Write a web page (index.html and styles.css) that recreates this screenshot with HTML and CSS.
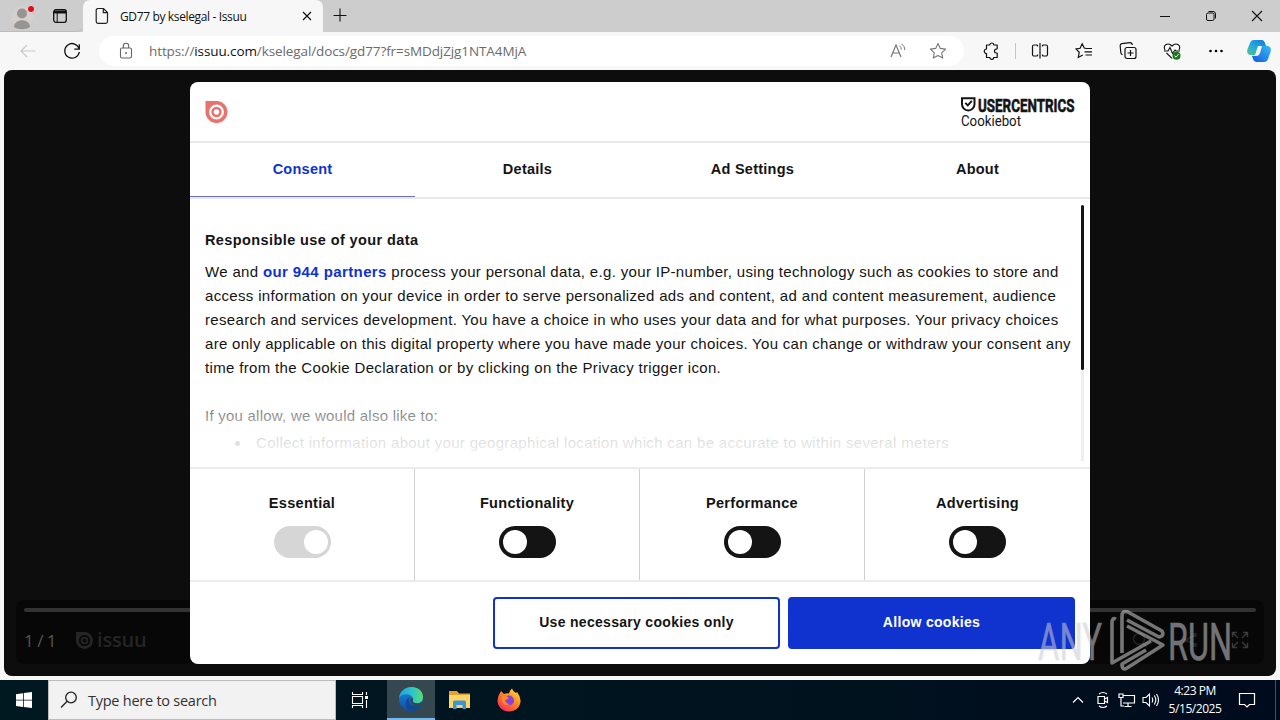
FILE: index.html
```html
<!DOCTYPE html>
<html lang="en">
<head>
<meta charset="UTF-8">
<meta name="viewport" content="width=device-width, initial-scale=1.0">
<title>GD77 by kselegal - Issuu</title>
<link rel="stylesheet" href="styles.css">
</head>
<body>

  <div class="desktop">
    <!-- Tab strip -->
    <header class="tabstrip">
      <div class="strip-left">
        <svg class="profile" width="26" height="28" viewBox="0 0 26 28"><circle cx="13" cy="14" r="11" fill="#d5d0ce"/><circle cx="13" cy="10.5" r="5" fill="#989492"/><path d="M5 24c0-9 16-9 16 0c-4 3-12 3-16 0z" fill="#989492"/><circle cx="22" cy="6" r="3.6" fill="#e00b1c" stroke="#ddd"/></svg>
        <svg width="16" height="16" viewBox="0 0 16 16"><rect x="1.7" y="1.7" width="12.6" height="12.6" rx="2.2" fill="none" stroke="#111" stroke-width="1.3"/><path d="M2 2.5h12v3H2z" fill="#111"/><path d="M5.2 5v9" stroke="#111"/></svg>
      </div>
      <div class="tab">
        <svg width="14" height="18" viewBox="0 0 14 18"><path d="M3 1.500h5.500l4 4V14.500a1.800 1.800 0 0 1-1.800 1.800H3a1.800 1.800 0 0 1-1.800-1.800V3.300A1.800 1.800 0 0 1 3 1.500zM8.300 1.700v4h4" fill="none" stroke="#222" stroke-width="1.200"/></svg>
        <span class="tab-title">GD77 by kselegal - Issuu</span>
        <svg width="10" height="10" viewBox="0 0 10 10"><path d="M1 1l8 8M9 1l-8 8" stroke="#111" stroke-width="1.2"/></svg>
      </div>
      <svg class="newtab" width="14" height="14" viewBox="0 0 14 14"><path d="M7 0.500v13M0.500 7.500h13" stroke="#111" stroke-width="1.100"/></svg>
      <div class="window-buttons">
        <div><svg width="12" height="12" viewBox="0 0 12 12"><path d="M1 6.500h10" stroke="#111"/></svg></div>
        <div><svg width="12" height="12" viewBox="0 0 12 12"><rect x="1.500" y="3" width="7.500" height="7.500" rx="1.500" fill="none" stroke="#111"/><path d="M3.500 1.500h4.500a2.500 2.500 0 0 1 2.500 2.500v4.500" fill="none" stroke="#111"/></svg></div>
        <div><svg width="12" height="12" viewBox="0 0 12 12"><path d="M1 1l10 10M11 1L1 11" stroke="#111" stroke-width="1.100"/></svg></div>
      </div>
    </header>

    <!-- Toolbar -->
    <nav class="toolbar">
      <svg class="back" width="16" height="14" viewBox="0 0 16 14"><path d="M15.500 7H1M7 1L1 7l6 6" fill="none" stroke="#c9c9c9" stroke-width="1.200"/></svg>
      <svg class="reload" width="18" height="18" viewBox="0 0 18 18"><path d="M16.200 7.200A7.300 7.300 0 1 0 16.300 10M16.300 2.200v5h-5" fill="none" stroke="#111" stroke-width="1.300"/></svg>
      <div class="address">
        <svg class="lock" width="14" height="18" viewBox="0 0 14 18"><rect x="1.500" y="6" width="11" height="10" rx="1.500" fill="none" stroke="#666" stroke-width="1.100"/><path d="M4.300 6V4a2.700 2.700 0 0 1 5.400 0v2" fill="none" stroke="#666" stroke-width="1.100"/><circle cx="7" cy="11" r="1" fill="#666"/></svg>
        <span class="url">https://<b>issuu.com</b>/kselegal/docs/gd77?fr=sMDdjZjg1NTA4MjA</span>
        <svg class="read" width="18" height="18" viewBox="0 0 18 18"><path d="M2 15L7 3l5 12M3.700 11h6.600" fill="none" stroke="#777" stroke-width="1.200"/><path d="M10.500 3.700q2 1.500 1.800 4M12.500 1.800q3.500 2.200 3.300 6.200" fill="none" stroke="#777"/></svg>
        <svg class="fav" width="18" height="18" viewBox="0 0 18 18"><path d="M9 1.500l2.300 4.900 5.300.7-3.900 3.700 1 5.300L9 13.500l-4.700 2.600 1-5.300L1.400 7.100l5.300-.7z" fill="none" stroke="#777" stroke-width="1.100" stroke-linejoin="round"/></svg>
      </div>
      <div class="tools">
        <div><svg width="18" height="18" viewBox="0 0 18 18"><path d="M4.500 3h3.300a2 2 0 0 1 4 0h3.400v3.300a.8.8 0 0 1-.8.900a1.900 1.900 0 0 0 0 3.800a.8.8 0 0 1 .8.900V15.500h-3.500a1.900 1.900 0 0 1-3.800 0H4.500v-4a2.200 2.200 0 1 1 0-4.500z" fill="none" stroke="#111" stroke-width="1.200" stroke-linejoin="round"/></svg></div>
        <i class="divider"></i>
        <div><svg width="18" height="18" viewBox="0 0 18 18"><path d="M6.500 3H3a1.500 1.500 0 0 0-1.500 1.500v8A1.500 1.500 0 0 0 3 14h3.500M11.500 3H15a1.500 1.500 0 0 1 1.500 1.500v8A1.500 1.500 0 0 1 15 14h-3.500M6.500 3v1.500M6.500 14v-1.500M11.500 3v1.500M11.500 14v-1.500M9 1v15.500" fill="none" stroke="#111" stroke-width="1.200"/></svg></div>
        <div><svg width="18" height="18" viewBox="0 0 18 18"><path d="M11 6.500L9.300 6 7.200 1.800 5.100 6.300 1 7l3.200 3.300-.9 5.100 4.500-2.500M10.500 6.500h6.500M9.500 9.800h7.500M10.500 13h6.500" fill="none" stroke="#111" stroke-width="1.200"/></svg></div>
        <div><svg width="18" height="18" viewBox="0 0 18 18"><rect x="6" y="5.500" width="11" height="11" rx="2" fill="none" stroke="#111" stroke-width="1.200"/><path d="M11.500 8v6M8.500 11h6M3.500 12.800q-1.500-.7-1.700-2.300L1.200 4a2 2 0 0 1 1.700-2.300l8-1q2-.1 2.400 2.300" fill="none" stroke="#111" stroke-width="1.200"/></svg></div>
        <div><svg width="18" height="18" viewBox="0 0 18 18"><path d="M2 8C-.5 3 5-.2 9 4c4-4.200 9.500-1 7 4M1 9h4l2-3.500 2.500 6L12 8l1 1h4M3.500 11L9 16.300" fill="none" stroke="#111" stroke-width="1.100"/><circle cx="13.500" cy="13.700" r="4" fill="#157a1b"/><path d="M11.500 13.800l1.500 1.400 2.600-3" fill="none" stroke="#fff"/></svg></div>
        <div><svg width="18" height="18" viewBox="0 0 18 18"><circle cx="3.500" cy="9" r="1.300"/><circle cx="9" cy="9" r="1.300"/><circle cx="14.500" cy="9" r="1.300"/></svg></div>
        <div class="copilot"><svg width="26" height="24" viewBox="0 0 26 24">
          <defs>
            <linearGradient id="cpA" x1="1" y1="0" x2="0" y2="1"><stop offset="0" stop-color="#1279d8"/><stop offset=".5" stop-color="#22a6df"/><stop offset="1" stop-color="#50c78b"/></linearGradient>
            <linearGradient id="cpB" x1="1" y1="0" x2="0" y2="1"><stop offset="0" stop-color="#35bdf0"/><stop offset="1" stop-color="#1557e8"/></linearGradient>
          </defs>
          <path d="M8 1h8q2 0 3 3l1 3h-4q-3 0-4 3l-2 6H4Q0 15 1.500 10L4 4Q5 1 8 1z" fill="url(#cpA)"/>
          <path d="M18 23h-8q-2 0-3-3l-1-3h4q3 0 4-3l2-7h6q4 1 2.500 6L22 20q-1 3-4 3z" fill="url(#cpB)"/>
          <path d="M12 7h3l-2.500 9H9z" fill="#f7f7f7"/>
        </svg></div>
      </div>
    </nav>

    <!-- Page -->
    <main class="viewport">
      <div class="player">
        <div class="track"></div>
        <div class="controls">
          <span class="pages">1 / 1</span>
          <svg width="17" height="17" viewBox="0 0 23 23"><path d="M0 0h11.500A11.500 11.500 0 1 1 0 11.500z" fill="#252525"/><circle cx="11.500" cy="11.500" r="6.400" fill="none" stroke="#070707" stroke-width="2.400"/><circle cx="11.500" cy="11.500" r="2.600" fill="#070707"/></svg>
          <span class="brand">issuu</span>
          <div class="control-icons">
            <svg width="18" height="18" viewBox="0 0 18 18"><circle cx="8" cy="8" r="5.500" fill="none" stroke="#222" stroke-width="1.500"/><path d="M12 12l4 4" stroke="#222" stroke-width="1.500"/></svg>
            <svg width="18" height="18" viewBox="0 0 18 18"><path d="M14 4L5 9l9 5" fill="none" stroke="#222" stroke-width="1.500"/><circle cx="14" cy="4" r="2.200" fill="#222"/><circle cx="5" cy="9" r="2.200" fill="#222"/><circle cx="14" cy="14" r="2.200" fill="#222"/></svg>
            <svg width="18" height="18" viewBox="0 0 18 18"><path d="M1.500 6V1.500H6M1.500 1.500l5.500 5.500M12 1.500h4.500V6M16.500 1.500L11 7M1.500 12v4.500H6M1.500 16.500L7 11M12 16.500h4.500V12M16.500 16.500L11 11" fill="none" stroke="#3a3a3a" stroke-width="1.400"/></svg>
          </div>
        </div>
      </div>
    </main>

    <!-- Taskbar -->
    <footer class="taskbar">
      <div class="start"><svg width="16" height="16" viewBox="0 0 16 16"><path d="M0 2.200L7 1.200v6.500H0zM7.800 1.100L16 0v7.700H7.800zM0 8.400h7v6.500l-7-1zM7.800 8.400H16V16l-8.200-1.100z" fill="#fff"/></svg></div>
      <div class="search">
        <svg width="18" height="18" viewBox="0 0 18 18"><circle cx="11" cy="6.500" r="5.300" fill="none" stroke="#222" stroke-width="1.300"/><path d="M7.200 10.300L1 16.500" stroke="#222" stroke-width="1.300"/></svg>
        <span>Type here to search</span>
      </div>
      <div class="task view"><svg width="18" height="18" viewBox="0 0 18 18"><path d="M1.500 1v2.500h10V1M1.500 17v-2.500h10V17M1.500 5.500h10v7h-10zM15.500 1v3M15.500 9v8" fill="none" stroke="#fff" stroke-width="1.100"/><path d="M14 5h3v3h-3z" fill="#fff"/></svg></div>
      <div class="task active"><svg width="26" height="26" viewBox="0 0 26 26">
        <defs>
          <linearGradient id="edA" x1="0" y1="0" x2="1" y2="0"><stop offset="0" stop-color="#249bdc"/><stop offset=".5" stop-color="#2bc3cf"/><stop offset="1" stop-color="#5bdc70"/></linearGradient>
          <linearGradient id="edB" x1="0" y1="0" x2="0" y2="1"><stop offset="0" stop-color="#1b8bd9"/><stop offset="1" stop-color="#0b4fae"/></linearGradient>
        </defs>
        <circle cx="13" cy="13" r="12" fill="url(#edB)"/>
        <path d="M1 12C3-3 25-2 25 11c0 5-4 7-8 6-3-1-2-2-2-4 0-5-10-7-14-1z" fill="url(#edA)"/>
        <path d="M12 11c-3 4 0 9 5 9 3 0 5-.8 7-2.200-2 4-5 7-10 7C6 24.500 6 13 12 11z" fill="#104a93"/>
        <path d="M12.500 13c1-2 3-1 2.600.8-.4 1.700-.6 2.400 1.400 3.200 3 1 6 .5 8.500-1.500l1 2c-6 5-15 2-13.500-4.500z" fill="#35474f"/>
      </svg></div>
      <div class="task"><svg width="24" height="20" viewBox="0 0 24 20"><path d="M1 1h8l2 2.500h11V18H1z" fill="#e7a22e"/><path d="M1 5h21v13H1z" fill="#fbd567"/><path d="M5 19v-7q0-1.500 1.500-1.500h10q1.500 0 1.500 1.500v7h-3.500v-4h-6v4z" fill="#3f94d0"/></svg></div>
      <div class="task"><svg width="24" height="24" viewBox="0 0 24 24">
        <defs><linearGradient id="ffA" x1="1" y1="0" x2=".2" y2="1"><stop offset="0" stop-color="#fff03a"/><stop offset=".5" stop-color="#ff8524"/><stop offset="1" stop-color="#f9285c"/></linearGradient></defs>
        <path d="M3 5l1-2 3 3q2-1 5-.5Q13 2 15 .5q1 3 4 4.500l1-1q4 5 3.500 9.500C23 20 18 23.500 12 23.500S.5 19 .5 12.500Q.7 8 3 5z" fill="url(#ffA)"/>
        <circle cx="12" cy="12.500" r="5" fill="#8642d8"/><path d="M5 8q4-1 7 2-2 2-4 2 1 4 5 4-6 3-8-3z" fill="#ff8a22"/>
      </svg></div>
      <div class="tray">
        <svg width="12" height="8" viewBox="0 0 12 8"><path d="M1 6.500l5-5 5 5" fill="none" stroke="#fff" stroke-width="1.200"/></svg>
        <svg width="14" height="18" viewBox="0 0 14 18"><path d="M2 5.500h6.500v7H2zM8.500 8l3-1.500v5L8.500 10M3 3q4-3 8 0M3 15q4 3 8 0" fill="none" stroke="#fff" stroke-width="1.200"/></svg>
        <svg width="18" height="16" viewBox="0 0 18 16"><path d="M5 3.500h11.500v7.500H5M10 11v3.500M6.500 14.500h7M1 2h4v3.500H1zM3 5.500v8.500h3" fill="none" stroke="#fff" stroke-width="1.200"/></svg>
        <svg width="18" height="16" viewBox="0 0 18 16"><path d="M1 5.500h3L7.500 2v12L4 10.500H1zM10 5.500q1.500 2.500 0 5M12.300 3.500q3 4.500 0 9M14.500 2q4 6 0 12" fill="none" stroke="#fff" stroke-width="1.100"/></svg>
        <div class="clock"><span class="time">4:23 PM</span><span class="date">5/15/2025</span></div>
        <svg width="18" height="18" viewBox="0 0 18 18"><path d="M1.500 2.500h15v11h-5L9 16l-2.500-2.500h-5z" fill="none" stroke="#fff" stroke-width="1.200"/></svg>
        <i class="peek"></i>
      </div>
    </footer>

    <!-- Cookie dialog -->
    <section class="dialog">
      <div class="dialog-head">
        <svg width="23" height="22" viewBox="0 0 23 23"><path d="M0 0h11.500A11.500 11.500 0 1 1 0 11.500z" fill="#e9736c"/><circle cx="11.500" cy="11.500" r="6.600" fill="none" stroke="#fff" stroke-width="2.400"/><circle cx="11.500" cy="11.500" r="2.800" fill="#fff"/></svg>
        <svg width="116" height="34" viewBox="0 0 116 34">
          <path d="M2 3.200h12.500v6a6.200 6.200 0 0 1-12.500 0z" fill="none" stroke="#141414" stroke-width="2"/><path d="M5.300 7.800l2.500 2.600 4-4.600" fill="none" stroke="#141414" stroke-width="1.900"/>
          <text class="logo-bold" x="18" y="16.500" textLength="96.500" lengthAdjust="spacingAndGlyphs">USERCENTRICS</text>
          <text class="logo-light" x="1" y="31" textLength="60" lengthAdjust="spacingAndGlyphs">Cookiebot</text>
        </svg>
      </div>
      <div class="dialog-tabs">
        <div class="current">Consent</div>
        <div>Details</div>
        <div>Ad Settings</div>
        <div>About</div>
      </div>
      <div class="dialog-body">
        <div class="text">
          <h2>Responsible use of your data</h2>
          <p>We and <b>our 944 partners</b> process your personal data, e.g. your IP-number, using technology such as cookies to store and<br>
          access information on your device in order to serve personalized ads and content, ad and content measurement, audience<br>
          research and services development. You have a choice in who uses your data and for what purposes. Your privacy choices<br>
          <span class="tight">are only applicable on this digital property where you have made your choices. You can change or withdraw your consent any</span><br>
          time from the Cookie Declaration or by clicking on the Privacy trigger icon.</p>
          <p class="allow">If you allow, we would also like to:</p>
          <ul><li>Collect information about your geographical location which can be accurate to within several meters</li></ul>
        </div>
        <div class="scrollbar"><div class="thumb"></div></div>
      </div>
      <div class="choices">
        <div><span>Essential</span><i class="switch locked"></i></div>
        <div><span>Functionality</span><i class="switch"></i></div>
        <div><span>Performance</span><i class="switch"></i></div>
        <div><span>Advertising</span><i class="switch"></i></div>
      </div>
      <div class="actions">
        <button class="outline">Use necessary cookies only</button>
        <button class="filled">Allow cookies</button>
      </div>
    </section>

    <!-- Watermark -->
    <svg class="watermark" width="204" height="72" viewBox="0 0 204 72">
      <text x="2" y="52" textLength="64" lengthAdjust="spacingAndGlyphs">ANY</text>
      <text x="132" y="52" textLength="64" lengthAdjust="spacingAndGlyphs">RUN</text>
      <path d="M80 11q-4-2-4 4V55L115 33M86 45V8q0-6 6-4l34 19q3 5-3 6L91 12M91 18L127 37L91 60q-5 3-5-4L110 42" fill="none" stroke="#d0d0d0" stroke-width="3.600" stroke-linejoin="round"/>
    </svg>
  </div>

</body>
</html>
```
FILE: styles.css
```css
* {
  box-sizing: border-box;
}

body {
  margin: 0;
  font-family: "Open Sans", "Noto Sans", sans-serif;
  color: #111;
  overflow: hidden;
}

svg {
  display: block;
  flex-shrink: 0;
}

.desktop {
  position: relative;
  display: flex;
  flex-direction: column;
  width: 1280px;
  height: 720px;
  background: #f7f7f7;
}

/* Browser */
.tabstrip {
  display: flex;
  height: 32px;
  background: #cdcdcd;
}

.strip-left {
  display: flex;
  align-items: center;
  gap: 17px;
  width: 83px;
  padding-left: 9px;
  border-bottom: 1px solid #bbb;
  border-radius: 0 0 6px 0;
}

.profile {
  margin-top: 3px;
}

.tab {
  display: flex;
  align-items: center;
  width: 240px;
  padding: 0 11px 0 12px;
  background: #f7f7f7;
  border-radius: 7px 7px 0 0;
}

.tab-title {
  flex: 1;
  padding-left: 11px;
  font-size: 12px;
  letter-spacing: -0.36px;
  white-space: nowrap;
}

.newtab {
  margin: 8px 0 0 10px;
}

.window-buttons {
  display: flex;
  margin-left: auto;
}

.window-buttons div {
  display: flex;
  align-items: center;
  justify-content: center;
  width: 46px;
}

.toolbar {
  display: flex;
  align-items: center;
  height: 38px;
}

.back {
  margin-left: 20px;
}

.reload {
  margin-left: 27px;
}

.address {
  display: flex;
  align-items: center;
  width: 865px;
  height: 30px;
  margin-left: 18px;
  padding: 0 17px 0 20px;
  background: #fff;
  border-radius: 15px;
}

.url {
  margin-left: 16px;
  font-size: 13.5px;
  letter-spacing: -0.1px;
  color: #6b6b6b;
  white-space: nowrap;
}

.url b {
  font-weight: 400;
  color: #111;
}

.read {
  margin-left: auto;
}

.fav {
  margin-left: 22px;
}

.tools {
  display: flex;
  align-items: center;
  margin-left: auto;
}

.tools div {
  display: flex;
  align-items: center;
  justify-content: center;
  width: 44px;
}

.tools .copilot {
  width: 42px;
}

.divider {
  width: 1px;
  height: 16px;
  margin: 0 2px;
  background: #c6c6c6;
}

.viewport {
  display: flex;
  align-items: flex-end;
  height: 606px;
  margin: 0 4px 4px;
  padding: 12px;
  background: #0d0d0d;
  border-radius: 8px;
}

.player {
  width: 100%;
  height: 64px;
  padding: 8px;
  background: #070707;
  border-radius: 8px;
}

.track {
  height: 4px;
  background: #333;
  border-radius: 2px;
}

.controls {
  display: flex;
  align-items: center;
  height: 56px;
}

.pages {
  width: 52px;
  font-size: 17px;
  letter-spacing: -0.5px;
  color: #555;
}

.brand {
  margin-left: 4px;
  font-size: 20px;
  font-weight: 600;
  line-height: 20px;
  letter-spacing: -0.2px;
  color: #252525;
}

.control-icons {
  display: flex;
  gap: 32px;
  margin-left: auto;
  padding-right: 7px;
}

/* Taskbar */
.taskbar {
  display: flex;
  height: 40px;
  background: linear-gradient(90deg, #001820, #00131f 60%, #000b1d);
  color: #fff;
}

.start,
.task {
  display: flex;
  align-items: center;
  justify-content: center;
  width: 48px;
}

.task {
  width: 49px;
}

.task.view {
  width: 51px;
  padding-right: 3px;
}

.task.active {
  width: 48px;
  background: #35474f;
  border-bottom: 2px solid #76b9ed;
}

.search {
  display: flex;
  align-items: center;
  gap: 10px;
  width: 288px;
  padding-left: 11px;
  background: #f2f2f2;
  border: 1px solid #bbb;
  color: #333;
  font-size: 14.5px;
  letter-spacing: -0.25px;
}

.tray {
  display: flex;
  align-items: center;
  margin-left: auto;
}

.tray svg + svg {
  margin-left: 12px;
}

.tray svg:nth-child(3) {
  margin-left: 8px;
}

.tray svg:nth-child(4) {
  margin-left: 6px;
}

.clock {
  display: flex;
  flex-direction: column;
  align-items: center;
  width: 70px;
  margin-right: 8px;
  font-size: 12px;
  line-height: 18px;
  letter-spacing: -0.45px;
}

.peek {
  width: 1px;
  height: 40px;
  margin: 0 4px 0 19px;
  background: #46505a;
}

/* Cookie dialog */
.dialog {
  position: absolute;
  left: 190px;
  top: 82px;
  display: flex;
  flex-direction: column;
  width: 900px;
  height: 582px;
  background: #fff;
  border-radius: 8px;
  font-family: "Liberation Sans", Arial, sans-serif;
  font-size: 15px;
  letter-spacing: 0.33px;
  color: #141414;
  overflow: hidden;
}

.dialog-head {
  display: flex;
  align-items: center;
  justify-content: space-between;
  height: 61px;
  padding: 0 14px 0 15px;
  border-bottom: 2px solid #e8e8e8;
}

.logo-bold {
  font: 700 19px "Roboto", sans-serif;
  letter-spacing: 0;
  fill: #141414;
  stroke: #141414;
  stroke-width: 0.6px;
}

.logo-light {
  font: 400 14.5px "Roboto", sans-serif;
  letter-spacing: 0;
  fill: #141414;
}

.dialog-tabs {
  display: flex;
  height: 56px;
  border-bottom: 2px solid #e8e8e8;
}

.dialog-tabs div {
  width: 225px;
  height: 54px;
  line-height: 52px;
  text-align: center;
  font-size: 14.5px;
  font-weight: 700;
  letter-spacing: 0.25px;
}

.dialog-tabs .current {
  color: #1032cf;
  border-bottom: 1px solid #6b70c8;
}

.dialog-body {
  position: relative;
  display: flex;
  justify-content: space-between;
  height: 268px;
  padding: 6px 6px 6px 15px;
  overflow: hidden;
}

/* fades the last lines of the text out */
.dialog-body::after {
  content: "";
  position: absolute;
  left: 0;
  right: 12px;
  bottom: 0;
  height: 86px;
  background: linear-gradient(rgba(255, 255, 255, 0), rgba(255, 255, 255, 0.84) 66%, #fff);
}

.text {
  white-space: nowrap;
  line-height: 24px;
}

.text h2 {
  margin: 23px 0 8px;
  font-size: 14.5px;
  line-height: 24px;
  letter-spacing: 0.4px;
}

.text p {
  margin: 0;
}

.text b {
  color: #1032cf;
  letter-spacing: 0.4px;
}

.text .tight {
  letter-spacing: 0.29px;
}

.text .allow {
  margin-top: 24px;
  letter-spacing: 0.24px;
}

.text ul {
  margin: 3px 0 0;
  padding-left: 30px;
  list-style: none;
}

.text li {
  display: flex;
  align-items: center;
}

.text li::before {
  content: "";
  width: 5px;
  height: 5px;
  margin-right: 16px;
  background: #141414;
  border-radius: 50%;
}

.scrollbar {
  width: 3px;
  background: #efefef;
}

.thumb {
  height: 165px;
  background: #141414;
  border-radius: 2px;
}

.choices {
  display: flex;
  height: 115px;
  border-top: 2px solid #ececec;
  border-bottom: 2px solid #ececec;
}

.choices div {
  display: flex;
  flex-direction: column;
  align-items: center;
  gap: 14px;
  width: 225px;
  padding-top: 26px;
  font-size: 14.5px;
  font-weight: 700;
  line-height: 17px;
  letter-spacing: 0.3px;
}

.choices div:not(:last-child) {
  border-right: 1px solid #d0d0d0;
}

.switch {
  width: 57px;
  height: 32px;
  padding: 4px;
  background: #141414;
  border-radius: 16px;
}

.switch::before {
  content: "";
  display: block;
  width: 24px;
  height: 24px;
  background: #fff;
  border-radius: 50%;
}

.switch.locked {
  padding-left: 30px;
  background: #d6d6d6;
}

.actions {
  display: flex;
  justify-content: flex-end;
  gap: 8px;
  padding: 15px 15px;
}

.actions button {
  width: 287px;
  height: 52px;
  padding-bottom: 3px;
  border: 2px solid #1032cf;
  border-radius: 4px;
  font: inherit;
  font-size: 14px;
  font-weight: 700;
  letter-spacing: 0.3px;
}

.outline {
  background: #fff;
  color: #141414;
}

.filled {
  background: #1032cf;
  color: #fff;
}

/* Watermark */
.watermark {
  position: absolute;
  left: 1036px;
  top: 608px;
  opacity: 0.55;
}

.watermark text {
  font: 400 52px "Roboto", sans-serif;
  fill: #ccccd0;
  stroke: #ccccd0;
  stroke-width: 0.6px;
}
```
